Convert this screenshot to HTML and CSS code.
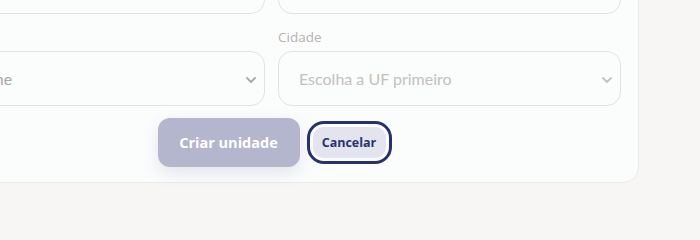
FILE: index.html
```html
<!DOCTYPE html>
<html lang="pt-BR">
<head>
<meta charset="utf-8">
<title>Nova unidade</title>
<link rel="stylesheet" href="styles.css">
</head>
<body>
<div class="card">
  <div class="grid">
    <div class="field">
      <div class="control"></div>
    </div>
    <div class="field">
      <div class="control"></div>
    </div>
    <div class="field">
      <label class="label label-empty">Estado</label>
      <div class="control select">
        <span class="value">Selecione</span>
        <svg class="chev" width="10" height="6" viewBox="0 0 10 6"><path d="M1 1l4 4 4-4" fill="none" stroke="#a8a8a8" stroke-width="1.8" stroke-linecap="round" stroke-linejoin="round"/></svg>
      </div>
    </div>
    <div class="field">
      <label class="label">Cidade</label>
      <div class="control select disabled">
        <span class="value">Escolha a UF primeiro</span>
        <svg class="chev" width="10" height="6" viewBox="0 0 10 6"><path d="M1 1l4 4 4-4" fill="none" stroke="#c2c2c2" stroke-width="1.8" stroke-linecap="round" stroke-linejoin="round"/></svg>
      </div>
    </div>
  </div>
  <div class="actions">
    <button class="btn btn-primary">Criar unidade</button>
    <button class="btn btn-cancel">Cancelar</button>
  </div>
</div>
</body>
</html>
```
FILE: styles.css
```css
* { box-sizing: border-box; }
html, body { margin: 0; padding: 0; }
body {
  background: #f7f6f5;
  font-family: "Lato", "Noto Sans", sans-serif;
  width: 700px;
  height: 240px;
  overflow: hidden;
}
.card {
  width: 733px;
  margin-left: -94px;
  margin-top: -59px;
  background: #fbfcfc;
  border: 1px solid #ebebea;
  border-radius: 16px;
  padding: 17px 17px 15px 17px;
}
.grid {
  display: grid;
  grid-template-columns: 341px 343px;
  column-gap: 13px;
}
.field {
  display: flex;
  flex-direction: column;
}
.label {
  font-family: "Open Sans", "Noto Sans", sans-serif;
  font-size: 13.5px;
  line-height: 18px;
  color: #b7b3af;
  margin: 14px 0 5px 0;
  height: 18px;
}
.label-empty { visibility: hidden; }
.control {
  height: 55px;
  border: 1px solid #e2e2e1;
  border-radius: 14px;
  background: #fbfcfc;
}
.select {
  display: flex;
  align-items: center;
  justify-content: space-between;
  padding: 0 8px 0 20px;
}
.value {
  font-size: 16px;
  color: #a8a5a3;
}
.disabled .value { color: #c4c0bc; }
.chev { margin-top: 2px; }
.actions {
  display: flex;
  justify-content: center;
  align-items: center;
  gap: 13px;
  margin-top: 12px;
  padding-right: 2px;
}
.btn {
  font-family: "Open Sans", "Noto Sans", sans-serif;
  font-weight: 700;
  border: none;
  cursor: pointer;
}
.btn-primary {
  width: 142px;
  height: 49px;
  border-radius: 12px;
  background: #b3b6cc;
  color: #ffffff;
  font-size: 14.5px;
  box-shadow: 0 6px 16px rgba(120, 125, 160, 0.18);
}
.btn-cancel {
  width: 73px;
  height: 31px;
  border-radius: 11px;
  background: #e3e4ee;
  color: #2a3272;
  font-size: 12.5px;
  outline: 3px solid #27316f;
  outline-offset: 3px;
  padding: 0;
}
```
